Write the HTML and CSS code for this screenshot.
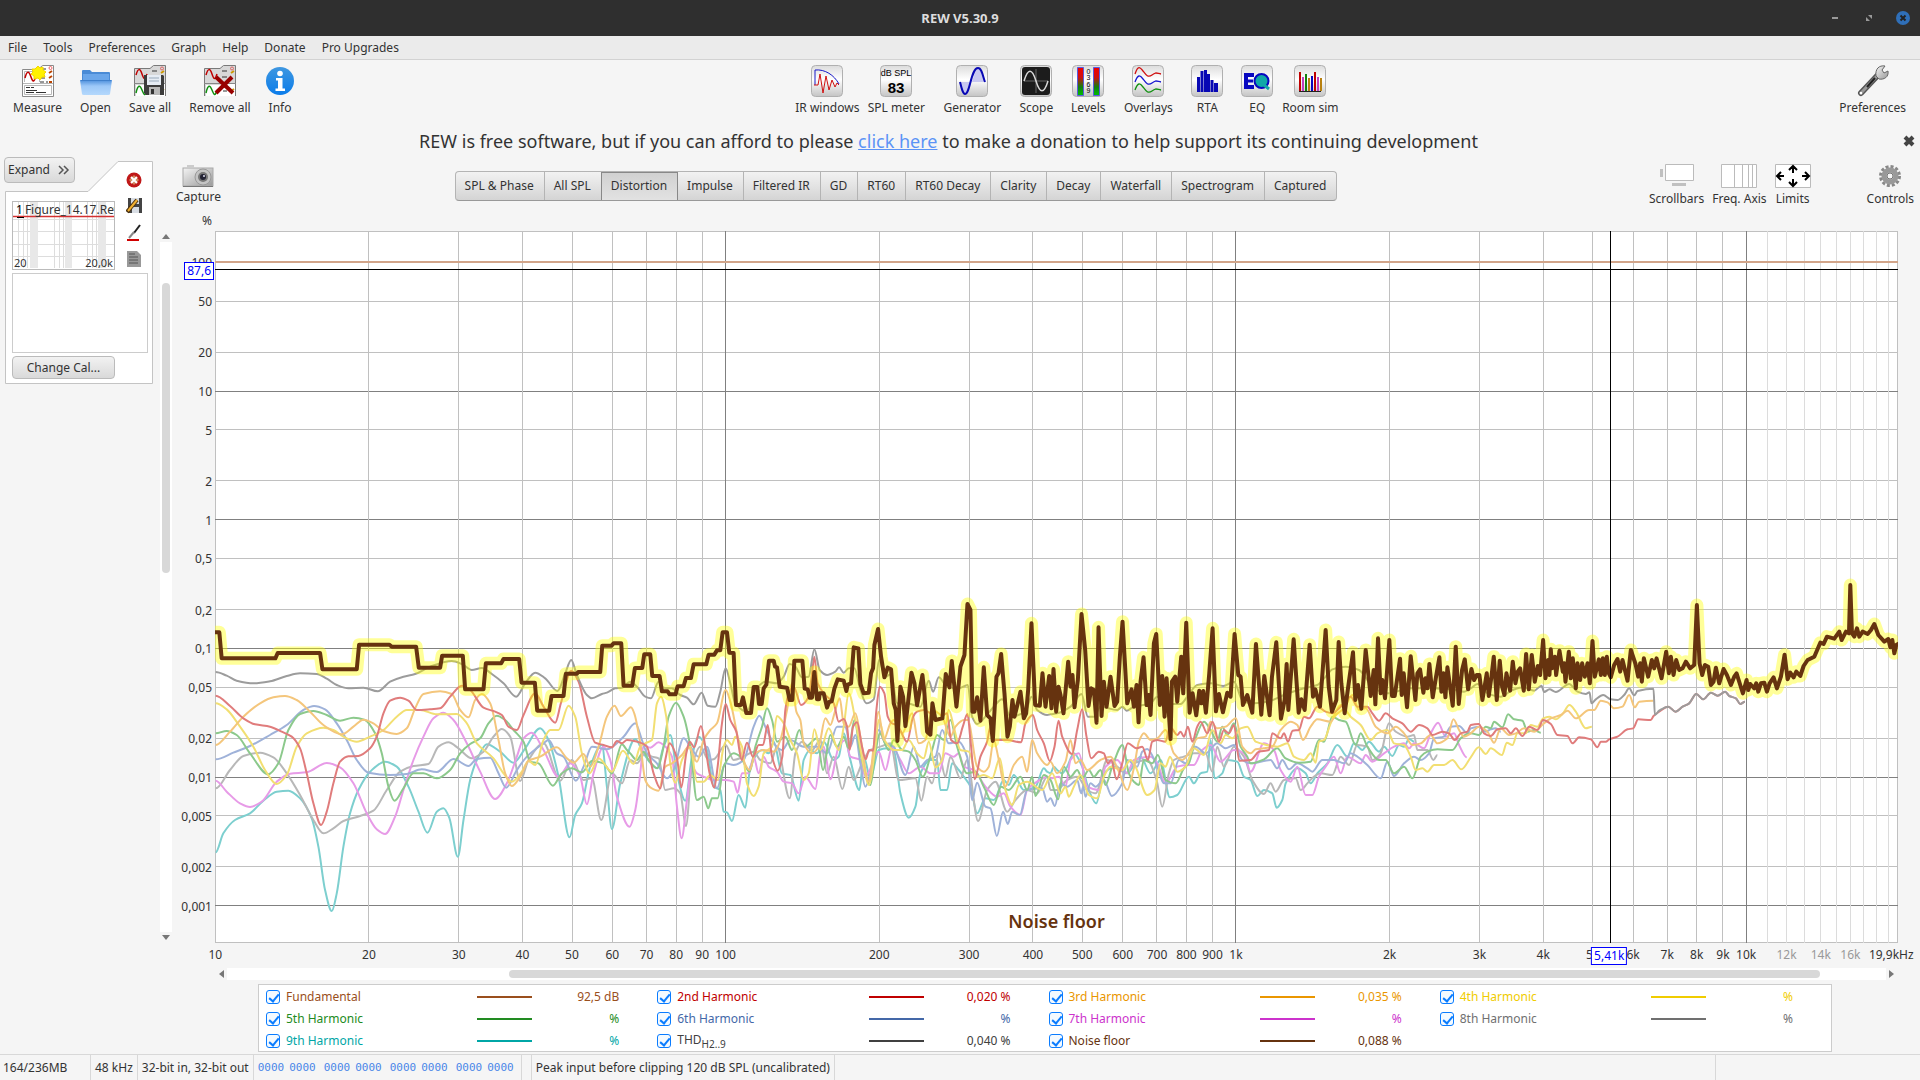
FILE: index.html
```html
<!DOCTYPE html>
<html lang="en">
<head>
<meta charset="utf-8">
<title>REW V5.30.9</title>
<link rel="stylesheet" href="styles.css">
</head>
<body>
<svg class="defs" aria-hidden="true">
  <defs>
    <linearGradient id="key" x1="0" y1="0" x2="0" y2="1"><stop offset="0" stop-color="#dcdcdc"/><stop offset=".45" stop-color="#fff"/><stop offset="1" stop-color="#c4c4c4"/></linearGradient>
    <linearGradient id="folder" x1="0" y1="0" x2="0" y2="1"><stop offset="0" stop-color="#4c8fdc"/><stop offset=".4" stop-color="#9cc8f8"/><stop offset="1" stop-color="#b4d8fc"/></linearGradient>
    <linearGradient id="info" x1="0" y1="0" x2="0" y2="1"><stop offset="0" stop-color="#3f97e0"/><stop offset="1" stop-color="#0a7cea"/></linearGradient>
    <linearGradient id="meter" x1="0" y1="0" x2="0" y2="1"><stop offset="0" stop-color="#f00000"/><stop offset=".35" stop-color="#d01010"/><stop offset=".7" stop-color="#108010"/><stop offset="1" stop-color="#00c000"/></linearGradient>
    <linearGradient id="steel" x1="0" y1="0" x2="1" y2="1"><stop offset="0" stop-color="#f4f4f4"/><stop offset="1" stop-color="#999"/></linearGradient>
    <symbol id="keycap" viewBox="0 0 32 32"><rect x=".5" y=".5" width="31" height="31" rx="4" fill="url(#key)" stroke="#b0b0b0"/></symbol>
    <symbol id="sheets" viewBox="0 0 32 32">
      <path d="M.5 31V3.500H16L19.500.5H31.500V31" fill="#d8d8d8" stroke="#7a7a7a"/>
      <path d="M17 18H31V31H17M2 20H17V31H2Z" fill="#fff"/>
      <path d="M2 10C4 3 6 3 8 9S11 15 13 9" fill="none" stroke="#c00000" stroke-width="1.500"/>
      <path d="M2 28C4 19 6 20 8 25S11 32 13 25" fill="none" stroke="#109010" stroke-width="1.500"/>
      <path d="M0 18.500H32" stroke="#888"/><path d="M18 6h5M18 12h5M19 22h5M19 26h4" stroke="#333"/>
      <circle cx="28" cy="3.500" r="1.500" fill="none" stroke="#d66"/><path d="M27 8l3-2M27 26l3-2" stroke="#c90" stroke-width="2"/>
    </symbol>
  </defs>
</svg>

<header class="titlebar">
  <h1>REW V5.30.9</h1>
  <div class="window-buttons">
    <button aria-label="Minimise"><svg width="14" height="14"><path d="M4 7h6" stroke="#999" stroke-width="2"/></svg></button>
    <button aria-label="Restore"><svg width="14" height="14"><path d="M6 4h4v4zM4 6v4h4z" fill="#999"/></svg></button>
    <button aria-label="Close"><svg width="14" height="14"><circle cx="7" cy="7" r="7" fill="#2f6fb8"/><path d="M4.500 4.500l5 5m0-5l-5 5" stroke="#222" stroke-width="2"/></svg></button>
  </div>
</header>

<nav class="menubar">
  <button>File</button><button>Tools</button><button>Preferences</button><button>Graph</button><button>Help</button><button>Donate</button><button>Pro Upgrades</button>
</nav>

<div class="toolbar">
  <div class="tools">
    <button class="tool"><svg width="32" height="32" viewBox="0 0 32 32"><path d="M.5 31.500V4.500H16L20.500.5H31.500V31.500Z" fill="#fff" stroke="#8a8a8a"/><path d="M1 18.500H31M2.500 20.500h27v9h-27zM2.500 17V6.500h15V17" fill="none" stroke="#b8b8b8"/><path d="M3 13C5 5 7 6 9 12S12 17 14 11" fill="none" stroke="#c00000" stroke-width="1.500"/><path d="M4 22.500h4m1 0h3M4 25.500h11M4 27.500h8m2 0h10M18 17h4m2 0h2M19 4h5M19 13h4" stroke="#333"/><path d="M27 8l3-2M27 13l3-2M27 17h3" stroke="#b40" stroke-width="2"/><circle cx="28.500" cy="3" r="1.500" fill="none" stroke="#e66"/><path d="M16 1l2 2 3-1 0 3 3 2-2 2 1 3-3 0-2 3-2-2-4 1 0-3-3-2 2-2-1-3 3 0z" fill="#fff200" stroke="#f3d400"/></svg>Measure</button>
    <button class="tool"><svg width="32" height="32" viewBox="0 0 32 32"><path d="M2 16V6q0-1 1-1h7l2 2h17q1 0 1 1v8z" fill="#4a8bd6"/><path d="M3 9h26v6H3z" fill="#6aa6ea"/><path d="M0 15h32l-2 14q0 1-2 1H4q-2 0-2-1z" fill="url(#folder)"/><path d="M1 15.500h30" stroke="#3f80cc"/></svg>Open</button>
    <button class="tool"><svg width="32" height="32" viewBox="0 0 32 32"><use href="#sheets"/><path d="M10 10h19l1 1v19H12l-2-2z" fill="#3c3c3c"/><path d="M13 10h14v10H13z" fill="#e6ecf4"/><path d="M15 13h10m-10 3h10" stroke="#9ab"/><path d="M15 22h11v8H15z" fill="#b8b8b8"/><path d="M17 24h3v5h-3z" fill="#333"/></svg>Save all</button>
    <button class="tool"><svg width="32" height="32" viewBox="0 0 32 32"><use href="#sheets"/><path d="M12 12l17 16M28 12L12 28" stroke="#980000" stroke-width="4"/></svg>Remove all</button>
    <button class="tool"><svg width="32" height="32" viewBox="0 0 32 32"><circle cx="16" cy="16" r="14" fill="url(#info)"/><circle cx="16" cy="8.500" r="2.800" fill="#fff"/><path d="M12 13h6.500v10.500H21V26H11.500v-2.500H14V15.500H12z" fill="#fff"/></svg>Info</button>
  </div>
  <div class="tools analysers">
    <button class="tool"><svg width="32" height="32" viewBox="0 0 32 32"><use href="#keycap"/><path d="M4 20V5C14 4 23 10 28 19" fill="none" stroke="#1818c8"/><path d="M3 20H7L9 9l3 19 3-17 3 14 3-10 3 7 2-4 2 2" fill="none" stroke="#d01010"/></svg>IR windows</button>
    <button class="tool"><svg width="32" height="32" viewBox="0 0 32 32"><use href="#keycap"/><text x="16" y="11" class="key-text">dB SPL</text><text x="16" y="28" class="key-number">83</text></svg>SPL meter</button>
    <button class="tool"><svg width="32" height="32" viewBox="0 0 32 32"><use href="#keycap"/><path d="M4 17H15C13 31 10 30 9 29 6 27 5 22 4 17zM16 17C20 3 22 2 24 3 27 5 28 12 28 17z" fill="#c8c8f0"/><path d="M4 17C6 25 7 29 9 29 14 29 15 3 22 3 26 3 27 12 29 17" fill="none" stroke="#0808b4" stroke-width="2"/></svg>Generator</button>
    <button class="tool"><svg width="32" height="32" viewBox="0 0 32 32"><use href="#keycap"/><rect x="2" y="2" width="28" height="28" rx="3" fill="#1c1c1c"/><path d="M4 16h24M16 4v24" stroke="#666"/><path d="M4 16C8 3 12 3 16 16S24 29 28 16" fill="none" stroke="#d8d8d8" stroke-width="1.500"/></svg>Scope</button>
    <button class="tool"><svg width="32" height="32" viewBox="0 0 32 32"><use href="#keycap"/><path d="M5.500 2.500h6v28h-6zM21.500 2.500h6v28h-6z" fill="url(#meter)" stroke="#5a5ae0"/><text x="16.500" y="9" class="key-tiny">0</text><text x="16.500" y="15" class="key-tiny">3</text><text x="16.500" y="22" class="key-tiny">6</text><text x="16.500" y="28" class="key-tiny">9</text></svg>Levels</button>
    <button class="tool"><svg width="32" height="32" viewBox="0 0 32 32"><use href="#keycap"/><g fill="none" stroke-width="1.300"><path d="M3 9C6 0 8 2 11 6S16 13 20 10 24 8 29 9" stroke="#d01010"/><path d="M3 17C6 9 8 10 11 14S16 21 20 18 24 16 29 17" stroke="#1818d0"/><path d="M3 25C6 17 8 18 11 22S16 29 20 26 24 24 29 25" stroke="#109010"/></g></svg>Overlays</button>
    <button class="tool"><svg width="32" height="32" viewBox="0 0 32 32"><use href="#keycap"/><path d="M6 12h3v15H6zM9.500 6h3v21h-3zM13 5h3v22h-3zM16 9h3v18h-3zM19.500 15h3v12h-3zM23 18h3v9h-3zM25 18h2v9h-2z" fill="#0808b4"/></svg>RTA</button>
    <button class="tool"><svg width="32" height="32" viewBox="0 0 32 32"><use href="#keycap"/><path d="M3 8h10v4H7v2.500h5v3H7V20h6v4H3z" fill="#0808c0"/><circle cx="20.500" cy="16" r="7" fill="#10a8a8" stroke="#0808c0" stroke-width="2"/><path d="M23 20l5 4" stroke="#10a8a8" stroke-width="3"/></svg>EQ</button>
    <button class="tool"><svg width="32" height="32" viewBox="0 0 32 32"><use href="#keycap"/><g stroke-width="2"><path d="M6 7v19M21 7v19" stroke="#c00000"/><path d="M9 12v14M24 12v14" stroke="#c040c0"/><path d="M12 9v17" stroke="#108010"/><path d="M15 13v13M27 13v13" stroke="#b88010"/><path d="M18 11v15" stroke="#0808c0"/></g><path d="M5 26.500h22" stroke="#222"/></svg>Room sim</button>
  </div>
  <div class="tools">
    <button class="tool"><svg width="32" height="32" viewBox="0 0 32 32"><path d="M4 28L21 10" stroke="#555" stroke-width="6" stroke-linecap="round"/><path d="M5 27L20 11" stroke="#999" stroke-width="3"/><path d="M10 22L18 13" stroke="#222" stroke-width="2"/><circle cx="4" cy="28" r="1.500" fill="#fff"/><path d="M19 11C18 4 22 0 28 1L25 5l2 3 4-2C32 12 27 15 22 14z" fill="url(#steel)" stroke="#666"/></svg>Preferences</button>
  </div>
</div>

<div class="banner">
  <p>REW is free software, but if you can afford to please <a href="#donate">click here</a> to make a donation to help support its continuing development</p>
  <button aria-label="Dismiss"><svg width="12" height="12"><path d="M2 2l8 8m0-8l-8 8" stroke="#444" stroke-width="4"/></svg></button>
</div>

<main>
  <aside class="card">
    <svg class="card-shape" width="149" height="224" aria-hidden="true"><path d="M.5 30.500H83L113 .5H147.500V222.500H.5Z" fill="#fff" stroke="#c4c4c4"/></svg>
    <div class="card-left">
      <button class="push expand">Expand <svg width="12" height="10"><path d="M1 1l4 4-4 4M6 1l4 4-4 4" fill="none" stroke="#555" stroke-width="1.500"/></svg></button>
      <div class="preview">
        <svg width="101" height="66" aria-hidden="true"><path d="M0 17.500h101M0 29.500h101M0 42.500h101M0 54.500h101" stroke="#ddd"/><path d="M5.500 0v66M10.500 0v66M14.500 0v66M41.500 0v66M46.500 0v66M50.500 0v66M74.500 0v66M79.500 0v66M83.500 0v66" stroke="#ddd"/><path d="M17 0h8v66h-8zM52 0h7v66h-7zM85 0h8v66h-8z" fill="#e8e8e8"/><path d="M0 14.500h101" stroke="#d43030" stroke-width="1.500"/><path d="M4 15.500h7" stroke="#000"/></svg>
        <span class="preview-name"><b>1</b>Figure_14.17.Rev</span>
        <span class="preview-range"><span>20</span><span>20,0k</span></span>
      </div>
    </div>
    <div class="card-actions">
      <button aria-label="Delete"><svg width="16" height="16"><circle cx="8" cy="8" r="7.500" fill="#c01818"/><path d="M8 3l5 5-5 5-5-5z" fill="#d08a60"/><path d="M5 5l6 6M11 5l-6 6" stroke="#fff" stroke-width="2"/></svg></button>
      <button aria-label="Save"><svg width="16" height="16"><path d="M2 0h14v15H2z" fill="#444"/><path d="M5 0h8v6H5zM6 9h7v6H6z" fill="#d8dde4"/><path d="M1 14L11 2" stroke="#4a3010" stroke-width="4"/><path d="M2 13L11 2" stroke="#f0b030" stroke-width="2"/></svg></button>
      <button aria-label="Trace colour"><svg width="16" height="17"><path d="M14 1L8 9" stroke="#222" stroke-width="2"/><path d="M8 8L3 14" stroke="#888" stroke-width="2"/><path d="M1 16h12" stroke="#d00000" stroke-width="2"/></svg></button>
      <button aria-label="Notes"><svg width="16" height="16"><path d="M1 0h10l4 4v12H1z" fill="#999"/><path d="M3 3h6M3 6h9M3 9h9M3 12h9" stroke="#555"/></svg></button>
    </div>
    <textarea aria-label="Measurement notes"></textarea>
    <button class="push change">Change Cal...</button>
  </aside>

  <div class="scroll vertical"><i class="arrow up"></i><div class="track"><div class="thumb"></div></div><i class="arrow down"></i></div>

  <section class="graph">
    <div class="graph-head">
      <button class="tool capture"><svg width="32" height="24" viewBox="0 0 32 24"><rect x="1" y="4" width="30" height="18" fill="url(#steel)" stroke="#aaa"/><rect x="5" y="1" width="7" height="3" fill="#ccc"/><path d="M1 22.500h30" stroke="#777"/><circle cx="21" cy="13" r="8" fill="#c4c4c4" stroke="#999"/><circle cx="21" cy="13" r="5" fill="#777"/><circle cx="21" cy="13" r="3" fill="#223"/><circle cx="22" cy="12" r="1" fill="#dde"/></svg>Capture</button>
      <span></span>
      <div class="tabs">
        <button>SPL &amp; Phase</button><button>All SPL</button><button class="selected">Distortion</button><button>Impulse</button><button>Filtered IR</button><button>GD</button><button>RT60</button><button>RT60 Decay</button><button>Clarity</button><button>Decay</button><button>Waterfall</button><button>Spectrogram</button><button>Captured</button>
      </div>
      <span></span>
      <div class="views">
        <button class="tool"><svg width="36" height="24"><path d="M6.500.5h28v16h-28z" fill="#fff" stroke="#bbb"/><path d="M1 5h3v8H1zM13 19h14v3H13z" fill="#c0c0c0"/></svg>Scrollbars</button>
        <button class="tool"><svg width="36" height="24"><path d="M.5.5h35v23H.5zM13.500 0v24M21.500 0v24M27.500 0v24M31.500 0v24" fill="#fff" stroke="#bbb"/></svg>Freq. Axis</button>
        <button class="tool"><svg width="36" height="24"><path d="M.5.5h35v23H.5z" fill="#fff" stroke="#bbb"/><path d="M18 9V3M14 6l4-4 4 4M18 15v6M14 18l4 4 4-4M9 12H3M6 8l-4 4 4 4M27 12h6M30 8l4 4-4 4" fill="none" stroke="#000" stroke-width="2"/></svg>Limits</button>
        <button class="tool controls"><svg width="24" height="24"><circle cx="12" cy="12" r="9.500" fill="none" stroke="#888" stroke-width="3" stroke-dasharray="3 2"/><circle cx="12" cy="12" r="6" fill="#c8c8c8" stroke="#999" stroke-width="5"/><circle cx="12" cy="12" r="3" fill="#f5f5f5" stroke="#777"/></svg>Controls</button>
      </div>
    </div>
    <div class="chart">
      <div class="unit">%</div>
      <div class="y-axis" id="y-axis"></div>
      <div class="plot">
        <svg id="traces" viewBox="0 0 5046 2136" preserveAspectRatio="none" role="img" aria-label="Distortion against frequency"></svg>
        <span class="trace-name">Noise floor</span>
      </div>
      <div class="x-axis" id="x-axis"></div>
      <div class="scroll horizontal"><i class="arrow left"></i><div class="track"><div class="thumb"></div></div><i class="arrow right"></i></div>
      <div class="legend" id="legend"></div>
    </div>
  </section>
</main>

<footer class="status">
  <span class="memory">164/236MB</span><span>48 kHz</span><span>32-bit in, 32-bit out</span>
  <span class="bits"><i>0000</i><i>0000</i><i>0000</i><i>0000</i><i>0000</i><i>0000</i><i>0000</i><i>0000</i></span>
  <span class="spacer"></span><span class="peak">Peak input before clipping 120 dB SPL (uncalibrated)</span><span class="message"></span>
</footer>
<script src="chart.js"></script>
</body>
</html>
```
FILE: styles.css
```css
* { box-sizing: border-box; }
body { margin: 0; min-height: 100vh; display: flex; flex-direction: column; background: #f5f5f5; color: #333; font: 12px/16px "Noto Sans", sans-serif; }
button { font: inherit; color: inherit; background: none; border: 0; padding: 0; }
svg { display: block; flex: none; }
.defs { position: absolute; width: 0; height: 0; }

.titlebar { display: grid; grid-template-columns: 1fr auto 1fr; align-items: center; height: 36px; background: #2f2f2f; }
.titlebar h1 { grid-column: 2; margin: 0; font-size: 13px; color: #ddd; }
.window-buttons { display: flex; justify-content: flex-end; gap: 20px; padding-right: 10px; }

.menubar { display: flex; gap: 16px; height: 24px; padding-left: 8px; background: #ebebeb; border-bottom: 1px solid #d2d2d2; }

.toolbar { display: flex; justify-content: space-between; height: 65px; padding: 5px 14px 0 13px; }
.tools { display: flex; gap: 18px; align-items: flex-start; }
.tool { display: flex; flex-direction: column; align-items: center; gap: 3px; white-space: nowrap; }
.tools:not(.analysers) .tool svg { margin: 0 -5px; }
.analysers { display: grid; gap: 0; padding-left: 4px; grid-template-columns: 66px 72px 80px 48px 56px 64px 54px 46px 60px; }
.key-text { font: 9px "Liberation Sans", sans-serif; text-anchor: middle; }
.key-number { font: bold 15px "Liberation Sans", sans-serif; text-anchor: middle; }
.key-tiny { font: 7px "Liberation Sans", sans-serif; text-anchor: middle; }

.banner { display: flex; align-items: center; height: 32px; padding-right: 5px; }
.banner p { flex: 1; margin: 0; padding-right: 6px; text-align: center; font-size: 18px; line-height: 24px; }
.banner a { color: #5b93f5; }

main { flex: 1; display: grid; grid-template-columns: 160px 12px 1fr; }

.card { position: relative; display: grid; grid-template-columns: 104px 32px; grid-auto-rows: max-content; align-content: start; margin-left: 12px; }
.card-shape { position: absolute; left: -7px; top: 4px; z-index: -1; }
.push { border: 1px solid #bbb; border-radius: 4px; background: linear-gradient(#f2f2f2, #d9d9d9); }
.expand { display: flex; align-items: center; gap: 8px; width: 71px; height: 26px; padding-left: 3px; margin-left: -8px; white-space: nowrap; }
.preview { position: relative; width: 103px; height: 69px; margin-top: 18px; border: 1px solid #bbb; background: #fff; overflow: hidden; }
.preview-name { position: absolute; left: 3px; top: 0; white-space: nowrap; }
.preview-name b { margin-right: 2px; font-weight: normal; color: #000; }
.preview-range { position: absolute; left: 1px; right: 1px; bottom: -2px; display: flex; justify-content: space-between; font-size: 11px; }
.card-actions { display: flex; flex-direction: column; align-items: center; gap: 10px; padding: 15px 0 0 4px; }
.card textarea { grid-column: 1 / 3; display: block; width: 136px; height: 80px; margin-top: 3px; border: 1px solid #ccc; background: #fff; resize: none; }
.change { width: 103px; height: 23px; margin-top: 3px; }

.scroll { display: flex; align-items: center; }
.track { position: relative; flex: 1; background: #fff; }
.thumb { position: absolute; background: #d8d8d8; border-radius: 4px; }
.arrow { width: 0; height: 0; border: 4px solid transparent; }
.vertical { flex-direction: column; gap: 3px; padding: 77px 0 114px; }
.vertical .track { width: 12px; }
.vertical .thumb { left: 2px; width: 8px; top: 6%; height: 42%; }
.up { border-top: 0; border-bottom: 5px solid #777; }
.down { border-bottom: 0; border-top: 5px solid #777; }
.left { border-left: 0; border-right: 5px solid #777; }
.right { border-right: 0; border-left: 5px solid #777; }

.graph { display: flex; flex-direction: column; }
.graph-head { display: grid; grid-template-columns: auto 3fr auto 4fr auto; height: 55px; padding: 7px 6px 0 4px; }
.capture { gap: 1px; }
.tabs { display: flex; align-self: start; height: 30px; margin-top: 7px; border: 1px solid #b4b4b4; border-bottom-color: #999; border-radius: 4px; background: linear-gradient(#f2f2f2, #d4d4d4); }
.tabs button { padding: 0 10px 0 9px; border-right: 1px solid #b4b4b4; white-space: nowrap; }
.tabs button:last-child { border-right: 0; }
.tabs .selected { background: linear-gradient(#d0d0d0, #e2e2e2); box-shadow: -1px 0 0 #888, inset 0 1px 0 #888; border-color: #888; }
.views { display: flex; align-items: flex-start; gap: 8px; }
.controls { margin-left: 48px; }

.chart { flex: 1; display: grid; grid-template-columns: 43px 1fr; grid-template-rows: 19px 1fr 25px 12px auto; padding-right: 22px; }
.unit { padding: 1px 3px 0 0; text-align: right; }
.plot { position: relative; grid-area: 2 / 2; border: 1px solid #c0c0c0; background: #fff; }
.plot svg { position: absolute; inset: -1px; width: calc(100% + 2px); height: calc(100% + 2px); }
.plot path { fill: none; vector-effect: non-scaling-stroke; stroke-linejoin: round; }
.trace-name { position: absolute; left: 0; right: 0; bottom: 9px; text-align: center; font-size: 18px; line-height: 24px; font-weight: 600; color: #66330f; text-shadow: 0 0 2px #fff, 0 0 2px #fff; }
.y-axis { position: relative; grid-area: 2 / 1; }
.y-axis span { position: absolute; right: 3px; margin-top: 1px; transform: translateY(-50%); }
.x-axis { position: relative; grid-area: 3 / 2; }
.x-axis span { position: absolute; top: 4px; transform: translateX(-50%); white-space: nowrap; }
.x-axis .faint { color: #999; }
.y-axis .cursor, .x-axis .cursor { padding: 0 2px; border: 1px solid #00f; background: #fff; color: #00f; }
.y-axis .cursor { right: 1px; }
.horizontal { grid-area: 4 / 2; gap: 3px; padding: 0 4px; }
.horizontal .track { height: 12px; }
.horizontal .thumb { top: 2px; height: 8px; left: 17%; right: 4%; }

.legend { grid-area: 5 / 2; display: grid; grid-template-columns: repeat(4, 1fr); grid-auto-rows: 22px; margin: 4px 66px 2px 43px; padding: 0 0 0 7px; border: 1px solid #ccc; background: #fff; }
.legend div { display: grid; grid-template-columns: 1fr 55px 87px; align-items: center; padding: 1px 38px 0 0; }
.legend label { display: flex; align-items: center; gap: 6px; white-space: nowrap; }
.legend hr { width: 55px; height: 2px; margin: 0; border: 0; background: currentColor; color: inherit; }
.legend output { text-align: right; }
.legend sub { font-size: 10px; line-height: 10px; vertical-align: -4px; }
.legend input { appearance: none; position: relative; width: 14px; height: 14px; margin: 0; border: 1px solid #0a7cff; border-radius: 3px; background: #f4faff; }
.legend input:checked::after { content: ""; position: absolute; left: 4px; top: 1px; width: 4px; height: 8px; border: solid #0a7cff; border-width: 0 2px 2px 0; transform: rotate(40deg); }

.status { display: flex; height: 26px; border-top: 1px solid #d8d8d8; line-height: 25px; white-space: nowrap; }
.status > span { padding: 0 4px; border-right: 1px solid #d8d8d8; }
.status .memory { width: 91px; padding-left: 3px; }
.status .bits { display: flex; width: 268px; font: 11px/25px "DejaVu Sans Mono", monospace; color: #4a86e8; }
.bits i { font-style: normal; margin-right: 8px; }
.bits i:nth-child(odd) { margin-right: 5px; }
.status .spacer { width: 10px; padding: 0; }
.status .message { flex: 1; margin-right: 204px; }
```
FILE: chart.js
```js
const NS = "http://www.w3.org/2000/svg";
const plot = document.getElementById("traces");
const W = 5046, H = 2136;
const xOf = f => (Math.log10(f) - 1) * 1530 + 1;
const yOf = v => 1252 - (Math.log10(v) + 1) * 386;

function stroke(d, color, width, extra) {
  const p = document.createElementNS(NS, "path");
  p.setAttribute("d", d);
  p.setAttribute("stroke", color);
  p.setAttribute("stroke-width", width);
  for (const k in extra || {}) p.setAttribute(k, extra[k]);
  plot.appendChild(p);
}
const crisp = { "shape-rendering": "crispEdges" };

for (let e = -3; e <= 1; e++)
  for (const m of [1, 2, 5]) stroke(`M0 ${yOf(m * 10 ** e)}H${W}`, m === 1 ? "#808080" : "#c0c0c0", 1, crisp);
for (let e = 1; e <= 3; e++)
  for (let m = 2; m <= 10; m++) stroke(`M${xOf(m * 10 ** e)} 0V${H}`, m === 10 ? "#808080" : "#c0c0c0", 1, crisp);
for (let f = 11; f < 20; f++) stroke(`M${xOf(f * 1000)} 0V${H}`, "#dcdcdc", 1, crisp);
stroke(`M0 ${yOf(100)}H${W}`, "#d2a58a", 2, crisp);

/* Each trace is stored in four consecutive blocks, 1260 units apart. */
function points(blocks) {
  const out = [];
  blocks.forEach((block, i) => {
    for (const pair of block.trim().split(/\s+/)) {
      if (!pair) continue;
      const [x, y] = pair.split(",").map(Number);
      const gx = x - 15 + i * 1260;
      if (!out.length || gx > out[out.length - 1][0]) out.push([gx, y + 987]);
    }
  });
  return out;
}
const line = p => "M" + p.map(q => q.join(" ")).join("L");
function smooth(p) {
  let d = "M" + p[0].join(" ");
  for (let i = 1; i < p.length; i++) {
    const a = p[i - 1], b = p[i], dx = (b[0] - a[0]) / 3;
    const slope = j => {
      if (j <= 0 || j >= p.length - 1) return 0;
      const l = (p[j][1] - p[j - 1][1]) / (p[j][0] - p[j - 1][0]);
      const r = (p[j + 1][1] - p[j][1]) / (p[j + 1][0] - p[j][0]);
      return l * r <= 0 ? 0 : 2 * l * r / (l + r);
    };
    d += `C${a[0] + dx} ${a[1] + slope(i - 1) * dx} ${b[0] - dx} ${b[1] - slope(i) * dx} ${b[0]} ${b[1]}`;
  }
  return d;
}

const harmonics = [
["#7dcfcf", [
"17,877 40,820 75,780 120,760 160,722 200,695 235,692 270,715 305,775 325,860 345,990 365,1053 380,1000 400,860 420,760 445,690 480,635 525,605 560,620 595,680 625,755 652,818 680,755 700,745 718,775 743,890 760,780 780,660 800,600 830,553 870,575 910,608 945,565 990,505 1015,540 1045,650 1078,832 1095,765 1115,730 1140,620 1175,555 1190,680 1205,807 1230,670",
"15,537 40,580 80,625 100,560 120,525 140,640 165,722 185,590 205,530 230,570 250,680 270,690 280,755 290,757 305,783 325,705 345,743 360,620 395,570 415,580 430,545 455,640 480,645 505,722 520,600 540,570 560,580 580,545 610,600 625,590 640,520 660,600 687,690 700,590 720,655 745,570 770,565 790,570 810,700 835,773 855,740 870,640 900,600 920,600 930,690 950,690 965,610 985,630 1000,650 1020,680 1040,760 1065,715 1090,720 1120,660 1135,675 1150,645 1180,690 1215,680 1240,625 1250,635",
"0,640 10,620 20,630 35,640 50,620 70,580 95,620 115,690 137,730 160,640 195,620 230,640 270,590 300,640 330,600 358,712 380,705 415,650 430,670 450,640 470,635 480,540 492,655 515,640 530,600 560,605 580,650 600,660 620,708 640,690 665,700 678,743 695,720 705,670 740,625 765,640 780,670 800,640 830,610 860,555 890,590 910,550 935,570 955,545 985,575 1000,560 1025,588 1045,555 1060,560 1075,537 1090,545", ""]],
["#b8b8b8", [
"17,685 60,630 100,588 150,578 190,592 230,640 270,705 310,780 340,820 370,805 400,783 450,768 490,752 530,690 570,635 610,618 655,612 685,560 715,547 745,565 785,595 820,575 850,530 875,507 900,530 930,663 955,600 1000,550 1050,662 1085,600 1120,660 1145,655 1173,780 1205,640 1235,670",
"0,600 20,610 45,580 65,590 85,595 105,690 130,685 150,700 167,798 185,620 210,560 235,600 250,598 286,555 310,600 340,590 370,575 390,600 420,610 440,560 478,715 495,580 515,545 545,570 570,540 590,640 610,590 636,687 655,620 670,660 695,610 720,570 750,560 780,550 805,660 855,655 873,722 890,650 905,670 925,580 945,650 960,590 990,655 1010,600 1043,783 1070,690 1095,665 1130,755 1155,720 1190,690 1220,700 1250,650",
"0,690 20,690 50,660 80,650 110,690 135,700 170,600 200,620 225,640 250,610 290,600 318,660 335,740 355,640 370,600 400,590 430,580 465,580 485,635 500,560 520,620 550,560 580,590 605,660 640,702 660,670 675,695 700,660 735,655 750,690 770,670 790,650 810,640 845,645 870,590 895,615 920,555 950,560 965,600 990,580 1015,490 1035,515 1070,530 1090,525 1100,570 1130,570 1148,600 1160,585", ""]],
["#e79be7", [
"17,662 50,695 90,730 120,741 155,725 200,665 240,641 290,637 350,609 390,622 430,670 470,760 500,808 525,822 555,770 580,690 610,600 640,530 670,475 700,458 730,480 770,550 810,635 855,717 890,670 920,590 940,535 965,518 1000,570 1045,650 1080,610 1110,650 1130,733 1150,640 1180,560 1200,600 1220,710 1258,800",
"15,750 30,640 40,555 60,563 85,547 100,555 125,590 140,740 154,835 170,720 185,620 200,640 220,650 250,660 286,660 310,665 322,698 335,640 355,640 370,590 385,640 400,590 415,620 440,635 460,665 485,670 505,700 525,650 555,687 570,580 580,560 600,658 625,560 645,540 660,590 690,600 705,650 745,575 765,630 785,560 810,600 835,640 870,620 900,640 925,640 945,580 970,590 985,580 1000,620 1030,630 1065,680 1100,710 1120,700 1140,740 1170,765 1190,690 1220,665 1250,650",
"0,655 25,650 45,680 60,600 85,580 110,680 145,690 165,620 200,600 230,640 250,600 300,590 320,610 345,670 380,620 410,615 430,615 455,570 480,555 510,605 550,570 580,580 600,635 640,550 670,570 690,630 720,665 740,620 765,705 785,705 805,650 825,620 850,590 870,640 890,590 930,610 945,585 965,605 1000,580 1030,560 1060,550 1075,565 1090,550 1120,565 1140,520 1162,488 1185,530 1210,520 1225,555 1248,592", ""]],
["#9fb2d9", [
"17,598 70,578 120,558 180,525 230,495 280,450 312,438 345,448 380,490 410,540 440,600 475,638 540,645 590,642 635,628 680,636 730,597 775,618 800,597 840,593 865,640 888,683 920,630 950,590 1000,550 1015,540 1040,580 1060,590 1097,662 1120,620 1145,560 1190,568 1240,530",
"15,490 35,540 50,580 80,610 110,655 130,630 160,535 180,560 205,590 230,560 260,685 285,610 310,615 340,600 370,500 387,467 405,500 430,550 455,570 480,540 520,560 560,560 590,580 620,500 645,500 660,560 675,525 690,610 705,680 720,640 745,510 765,550 790,560 825,645 850,560 870,620 890,600 915,590 935,510 955,550 985,545 1010,590 1025,720 1040,668 1065,740 1080,745 1099,828 1118,755 1132,792 1145,755 1168,765 1190,690 1235,685 1250,725",
"0,715 13,738 30,670 50,680 80,660 92,700 98,680 105,710 120,670 135,680 160,660 184,708 215,670 230,600 260,620 275,575 290,567 320,620 340,670 360,670 385,600 405,610 435,560 465,580 500,550 525,565 550,555 575,600 600,610 660,600 680,625 695,600 715,628 740,610 770,625 785,635 815,600 850,600 880,610 900,580 920,590 950,615 990,655 1010,605 1030,648 1060,610 1090,590 1110,600 1135,580 1150,535 1180,530 1200,500 1225,498 1250,520",
"0,505 25,500 45,515 60,508 75,505 90,515"]],
["#8cc98c", [
"17,520 50,513 80,525 120,580 175,643 205,610 235,510 270,462 310,453 350,465 390,482 430,473 465,480 495,520 515,580 535,680 553,722 580,685 610,640 640,640 680,655 720,630 750,580 780,552 810,535 835,490 860,467 885,480 910,510 940,545 960,605 985,610 1028,677 1055,640 1085,625 1115,637 1145,603 1180,610 1205,640 1235,553 1250,570",
"0,580 20,600 40,575 55,600 82,625 100,560 115,470 137,428 160,470 180,560 200,720 220,710 234,745 245,715 262,715 280,620 310,580 330,590 358,635 375,560 395,500 410,445 425,480 440,545 465,530 485,570 507,510 525,560 560,535 578,630 600,525 620,560 640,530 655,565 672,480 690,580 720,675 735,580 748,520 775,570 790,540 815,570 835,575 855,600 877,650 905,570 920,525 940,540 960,480 980,560 1010,640 1035,635 1060,680 1090,735 1112,680 1135,690 1170,650 1190,690 1205,650 1215,708 1240,645",
"0,660 23,718 40,620 60,650 80,630 95,655 115,630 130,650 150,630 165,675 185,620 216,555 235,640 250,665 265,675 280,600 305,610 322,585 345,660 375,670 400,625 415,610 435,535 460,485 480,510 500,545 515,500 530,525 550,490 570,560 590,590 600,610 640,598 680,565 705,595 745,608 780,605 805,540 820,545 845,470 865,480 885,485 915,555 930,520 950,560 985,600 1005,600 1030,640 1060,620 1085,655 1110,590 1130,575 1160,568 1205,570 1230,535 1250,522",
"0,520 25,525 45,500 60,505 70,485 95,502 112,463 130,478 155,482 170,515 190,510 210,518"]],
["#f2df72", [
"17,430 50,448 90,500 130,560 165,630 200,672 230,645 260,560 290,520 340,503 370,510 400,530 440,545 480,530 520,510 560,470 590,450 630,450 680,463 740,462 770,490 800,550 850,595 880,640 905,665 935,635 955,603 975,615 1000,540 1020,510 1045,510 1075,437 1095,470 1115,580 1138,640 1165,595 1205,635 1238,572",
"10,612 30,560 45,550 65,540 80,430 92,410 108,470 120,610 135,668 155,600 180,560 200,665 220,665 240,645 262,660 280,560 290,540 305,555 315,530 335,560 350,670 370,708 385,680 400,580 425,560 440,468 460,490 480,540 500,580 520,660 535,640 552,508 570,570 595,505 625,570 640,500 655,400 675,480 700,620 715,675 735,560 745,480 765,545 790,570 815,570 835,540 860,580 880,595 895,545 915,622 935,600 955,450 970,500 990,570 1015,575 1040,650 1060,645 1085,655 1108,595 1125,690 1145,735 1165,675 1190,665 1235,690",
"5,640 30,700 45,680 55,710 70,680 90,645 115,705 140,715 160,650 180,620 215,630 240,600 255,620 290,705 312,690 330,610 345,620 358,590 380,635 405,620 430,565 460,585 485,510 510,550 525,525 545,535 570,505 590,500 615,545 650,555 680,560 710,550 730,590 760,600 780,580 795,608 805,545 820,540 840,490 870,435 900,470 930,495 960,540 980,520 1010,510 1030,550 1060,555 1080,590 1095,630 1115,625 1130,635 1150,615 1180,615 1205,600 1232,628",
"0,592 24,562 45,582 60,565 94,585 108,548 125,555 140,520 165,520 180,495 200,500 217,475 235,470 255,478 275,462 296,435 315,455 345,505 363,500"]],
["#f4c67c", [
"17,555 60,515 100,470 150,430 190,412 225,408 260,420 300,455 340,495 395,523 430,500 460,479 490,490 520,513 560,522 590,505 615,445 640,402 690,394 725,402 750,450 775,472 795,420 815,402 840,430 865,540 885,640 905,678 930,650 955,602 990,590 1040,562 1070,595 1090,608 1120,582 1140,620 1165,560 1190,470 1213,437 1232,468",
"2,442 12,460 30,550 45,660 60,682 85,692 105,620 125,610 155,585 175,560 200,605 220,540 240,510 260,490 286,390 300,425 320,520 335,590 358,630 375,580 400,570 432,575 450,540 470,450 485,370 498,455 510,480 520,550 545,580 565,560 585,475 600,495 615,450 628,415 640,490 655,500 675,460 690,530 715,665 730,560 744,455 760,540 780,490 790,480 815,520 845,460 865,550 885,540 905,450 935,470 960,530 975,500 1000,480 1012,480 1040,620 1060,635 1075,620 1090,540 1103,590 1124,680 1150,615 1175,590 1190,635 1205,540 1220,580 1250,615",
"0,605 20,640 45,605 60,540 75,610 90,600 110,630 150,600 180,590 205,635 230,690 250,625 265,545 280,520 300,540 320,535 345,510 370,580 395,600 420,570 440,535 465,530 480,485 500,505 525,500 556,475 575,560 600,580 615,568 640,565 665,560 690,510 720,485 740,495 757,540 780,500 800,478 840,485 855,465 880,445 905,405 925,450 945,445 975,500 1010,520 1035,500 1060,520 1085,555 1110,550 1140,525 1160,550 1190,535 1208,478 1225,510 1240,530",
"0,520 25,500 50,515 70,548 90,505 115,525 135,520 160,505 190,515 217,492 240,475 270,465 290,452 315,475 355,450 370,450 390,422 410,427 430,445 455,440 475,405 492,442 505,425 548,422"]],
["#e07c7c", [
"17,407 60,438 100,475 135,493 180,500 215,515 245,530 270,565 290,640 310,730 333,795 350,755 370,670 390,605 415,589 445,588 480,565 500,530 520,460 540,422 570,413 595,422 620,450 660,448 690,445 720,410 755,377 780,390 820,443 855,455 875,465 895,500 920,510 940,465 975,400 1000,440 1035,488 1052,430 1083,332 1105,365 1130,470 1155,548 1180,555 1205,562 1220,543 1235,550 1250,540",
"0,541 30,548 50,560 70,640 90,685 105,600 118,550 140,595 153,682 168,580 178,545 192,562 212,498 225,560 238,640 252,683 262,620 275,490 286,432 300,480 318,515 334,600 350,548 368,590 385,555 398,555 412,495 425,590 442,632 456,590 465,450 475,400 490,380 512,435 535,410 545,340 552,290 562,370 585,405 610,430 625,485 640,477 650,500 658,570 668,500 680,487 695,560 706,598 716,570 728,572 738,450 748,380 762,400 772,470 785,490 800,495 830,545 848,470 860,455 880,450 900,460 920,480 950,460 962,540 980,550 997,500 1011,462 1020,540 1033,658 1050,590 1070,545 1080,500 1090,540 1130,540 1172,547 1185,490 1207,465 1220,510 1240,550 1258,603",
"12,560 24,482 35,530 65,582 80,510 95,448 108,530 122,595 145,575 160,580 172,610 182,600 198,658 215,610 232,550 258,565 275,560 292,600 305,545 320,540 345,545 358,500 380,525 390,515 400,530 412,500 425,545 440,500 450,485 470,520 486,485 505,545 520,510 535,520 550,495 566,602 600,600 625,575 655,570 665,520 690,535 700,520 712,545 726,512 745,510 760,470 775,475 800,440 825,455 845,460 870,440 900,410 920,440 950,440 965,460 985,482 1005,460 1025,475 1055,490 1080,515 1105,495 1130,505 1145,525 1175,515 1195,520 1212,540 1230,520 1250,515",
"0,495 24,492 40,520 60,528 80,508 105,505 120,520 135,505 155,528 175,500 200,510 217,480 240,492 260,525 290,528 305,550 325,532 360,538 380,562 390,545 405,545 415,538 440,530 470,508 487,505 502,478 540,480 548,468 565,455 592,440 614,455 635,440 655,430 676,402 697,418 720,398 740,407 763,395 775,408 795,415 808,432 822,425"]],
["#9c9c9c", [
"17,336 50,347 80,362 130,370 180,364 230,348 270,340 320,342 350,356 380,375 415,385 460,383 503,394 540,365 580,350 615,342 660,320 725,303 755,312 785,330 815,324 845,342 880,370 918,410 945,370 975,338 1005,355 1042,393 1065,340 1083,300 1100,345 1130,405 1145,415 1175,402 1190,398 1215,385 1235,383",
"0,365 20,380 45,410 62,415 85,365 100,383 125,385 150,405 170,413 190,433 214,398 232,437 255,440 270,395 286,325 300,370 315,430 350,455 375,390 405,365 440,370 460,350 478,312 495,320 515,352 535,350 552,268 568,330 590,345 615,335 626,322 640,338 655,325 672,325 690,390 708,430 730,418 746,300 765,350 782,342 800,430 830,430 870,440 895,362 908,395 925,352 950,380 985,385 1012,375 1025,470 1040,492 1065,470 1090,440 1115,418 1140,470 1185,455 1203,410 1220,450 1250,465",
"0,463 20,460 60,440 93,402 112,470 130,470 150,440 200,450 216,440 228,452 250,440 300,430 320,410 345,432 390,432 410,410 440,375 480,370 518,378 550,365 575,420 600,430 650,425 700,405 760,385 800,375 825,350 845,328 885,320 925,330 970,385 1010,400 1080,385 1130,385 1200,388 1240,395",
"0,385 20,372 50,400 90,410 125,390 160,382 190,392 212,377 220,396 236,388 255,396 295,372 320,395 345,402 356,397 362,430 375,418 397,405 420,418 440,420 460,405 475,385 490,406 500,393 548,386 552,465 565,452 592,440 614,455 635,440 655,430 676,402 697,418 720,398 740,407 763,395 775,408 795,415 808,432 822,425"]]
];
for (const [color, blocks] of harmonics) stroke(smooth(points(blocks)), color, 2);

const floor = line(points([
"14,217 28,217 35,295 196,295 203,279 330,279 337,328 440,328 447,254 538,254 545,260 618,260 626,323 690,323 696,287 758,287 765,388 820,388 827,310 873,310 880,297 927,297 934,368 974,368 981,452 1017,452 1024,408 1060,408 1067,341 1100,341 1104,336 1170,336 1176,257 1204,257 1210,250 1233,250 1240,377",
"6,377 14,324 36,324 42,283 60,283 66,348 88,348 95,394 112,394 118,403 136,403 142,379 160,379 167,354 182,354 190,313 228,313 235,284 252,284 260,271 270,271 277,217 290,217 297,278 310,279 317,435 332,435 338,412 348,459 362,459 370,381 381,381 386,432 394,432 400,385 408,374 416,302 430,302 434,320 440,322 448,380 470,383 478,420 486,420 492,302 516,302 523,386 532,388 538,413 545,413 552,336 560,418 566,418 568,400 580,400 590,443 596,426 604,424 612,386 622,358 640,362 648,393 652,374 662,370 670,262 684,265 690,372 700,400 715,398 722,340 728,325 732,255 743,207 752,290 762,352 772,323 782,328 790,430 796,450 801,543 810,380 818,410 825,498 843,338 852,370 860,436 876,345 882,400 890,515 900,524 906,430 915,480 936,475 946,342 957,382 964,303 978,440 990,320 1002,285 1011,132 1020,150 1026,455 1032,455 1040,412 1050,482 1060,322 1070,465 1080,475 1087,543 1098,350 1104,340 1112,282 1122,400 1131,530 1138,500 1146,420 1152,470 1162,430 1170,395 1180,475 1187,460 1193,390 1203,190 1214,435 1228,437 1236,340 1245,440 1256,348",
"3,445 9,327 17,455 24,380 30,405 39,460 53,305 60,380 66,345 72,442 82,360 93,162 104,270 114,438 122,385 130,390 138,488 144,202 153,468 160,365 168,440 180,350 192,438 200,425 208,290 216,185 230,430 243,388 250,440 258,375 264,487 270,365 279,292 288,435 294,405 300,465 310,250 317,222 328,435 335,348 342,470 348,355 360,537 364,365 374,350 380,425 392,290 398,400 407,188 417,458 426,400 437,466 446,392 452,430 458,393 466,458 476,340 486,205 496,454 505,402 517,457 530,398 540,410 552,222 563,345 570,350 577,435 590,405 605,458 616,252 632,464 641,348 657,466 664,350 677,247 691,476 702,420 708,312 713,450 729,238 744,458 752,418 762,450 777,254 787,410 794,388 808,440 825,210 834,378 844,455 857,420 864,246 872,370 882,460 892,385 907,277 914,420 922,375 932,446 945,270 960,408 969,330 974,433 982,235 990,400 995,360 1003,415 1016,240 1024,408 1032,408 1048,296 1053,405 1059,340 1069,442 1080,289 1094,420 1100,340 1108,328 1118,398 1124,355 1130,385 1136,312 1146,412 1156,350 1166,292 1172,395 1178,340 1184,412 1190,322 1206,437 1215,260 1224,432 1234,330 1242,298 1252,388",
"2,327 10,360 18,345 26,345 35,420 48,340 54,408 62,350 69,290 78,420 87,302 94,380 101,405 107,340 118,392 126,305 134,370 141,335 148,325 159,392 166,282 174,388 183,285 192,365 201,318 208,345 217,240 224,355 232,300 236,345 240,268 244,325 252,290 256,345 266,272 276,335 280,310 284,365 294,275 300,355 306,295 315,385 320,310 328,360 334,310 342,350 350,310 357,370 365,243 372,350 384,298 390,345 396,295 402,345 408,290 414,340 420,352 430,315 440,297 448,335 455,300 470,362 480,270 494,312 502,350 508,310 513,365 519,295 532,350 543,300 550,325 557,295 572,355 586,275 594,340 600,290 608,345 616,300 625,330 635,325 645,305 658,325 670,315 678,135 686,310 694,345 702,315 712,320 720,375 728,365 735,323 745,370 758,327 768,345 780,375 790,350 797,340 808,375 816,400 827,360 832,390 838,372 850,385 856,370 862,395 870,370 880,368 888,395 896,370 908,352 918,385 930,350 941,284 950,358 958,338 968,352 976,335 988,348 998,318 1010,300 1030,290 1048,248 1058,252 1068,230 1090,236 1105,215 1112,240 1125,215 1134,220 1138,75 1143,220 1150,230 1158,205 1165,230 1175,215 1190,222 1200,210 1210,192 1222,225 1240,245 1252,237 1258,262 1264,240 1270,280 1276,255 1284,250"
]));
stroke(floor, "#ffff00", 13, { opacity: 0.4, "stroke-linecap": "round" });
stroke(floor, "#66330f", 4);
stroke(`M0 ${yOf(87.6)}H${W}M${xOf(5410)} 0V${H}`, "#000", 1, crisp);

function label(axis, text, side, at, cls) {
  const s = document.createElement("span");
  s.textContent = text;
  s.style[side] = at.toFixed(2) + "%";
  if (cls) s.className = cls;
  axis.appendChild(s);
}
const yAxis = document.getElementById("y-axis"), xAxis = document.getElementById("x-axis");
for (const v of [100, 50, 20, 10, 5, 2, 1, 0.5, 0.2, 0.1, 0.05, 0.02, 0.01, 0.005, 0.002, 0.001])
  label(yAxis, String(v).replace(".", ","), "top", yOf(v) / H * 100);
label(yAxis, "87,6", "top", yOf(87.6) / H * 100, "cursor");
for (let e = 1; e <= 3; e++)
  for (let m = 1; m < 10; m++) label(xAxis, e === 3 ? m + "k" : String(m * 10 ** e), "left", xOf(m * 10 ** e) / W * 100);
label(xAxis, "10k", "left", xOf(10000) / W * 100);
for (const k of [12, 14, 16]) label(xAxis, k + "k", "left", xOf(k * 1000) / W * 100, "faint");
label(xAxis, "19,9kHz", "left", 99.6);
label(xAxis, "5,41k", "left", xOf(5390) / W * 100, "cursor");

const legend = document.getElementById("legend");
[["Fundamental", "#9a4f1d", "92,5 dB"], ["2nd Harmonic", "#c00000", "0,020 %"], ["3rd Harmonic", "#ea9600", "0,035 %"], ["4th Harmonic", "#f0cc00", "%"],
 ["5th Harmonic", "#228b22", "%"], ["6th Harmonic", "#4468a8", "%"], ["7th Harmonic", "#cc33cc", "%"], ["8th Harmonic", "#707070", "%"],
 ["9th Harmonic", "#00a6a6", "%"], ["THD<sub>H2..9</sub>", "#404040", "0,040 %"], ["Noise floor", "#66330f", "0,088 %"]]
.forEach(([name, color, value], i) => {
  const row = document.createElement("div");
  row.style.color = color;
  row.innerHTML = `<label for="t${i}"><input type="checkbox" id="t${i}" checked><span>${name}</span></label><hr><output>${value}</output>`;
  legend.appendChild(row);
});
```
